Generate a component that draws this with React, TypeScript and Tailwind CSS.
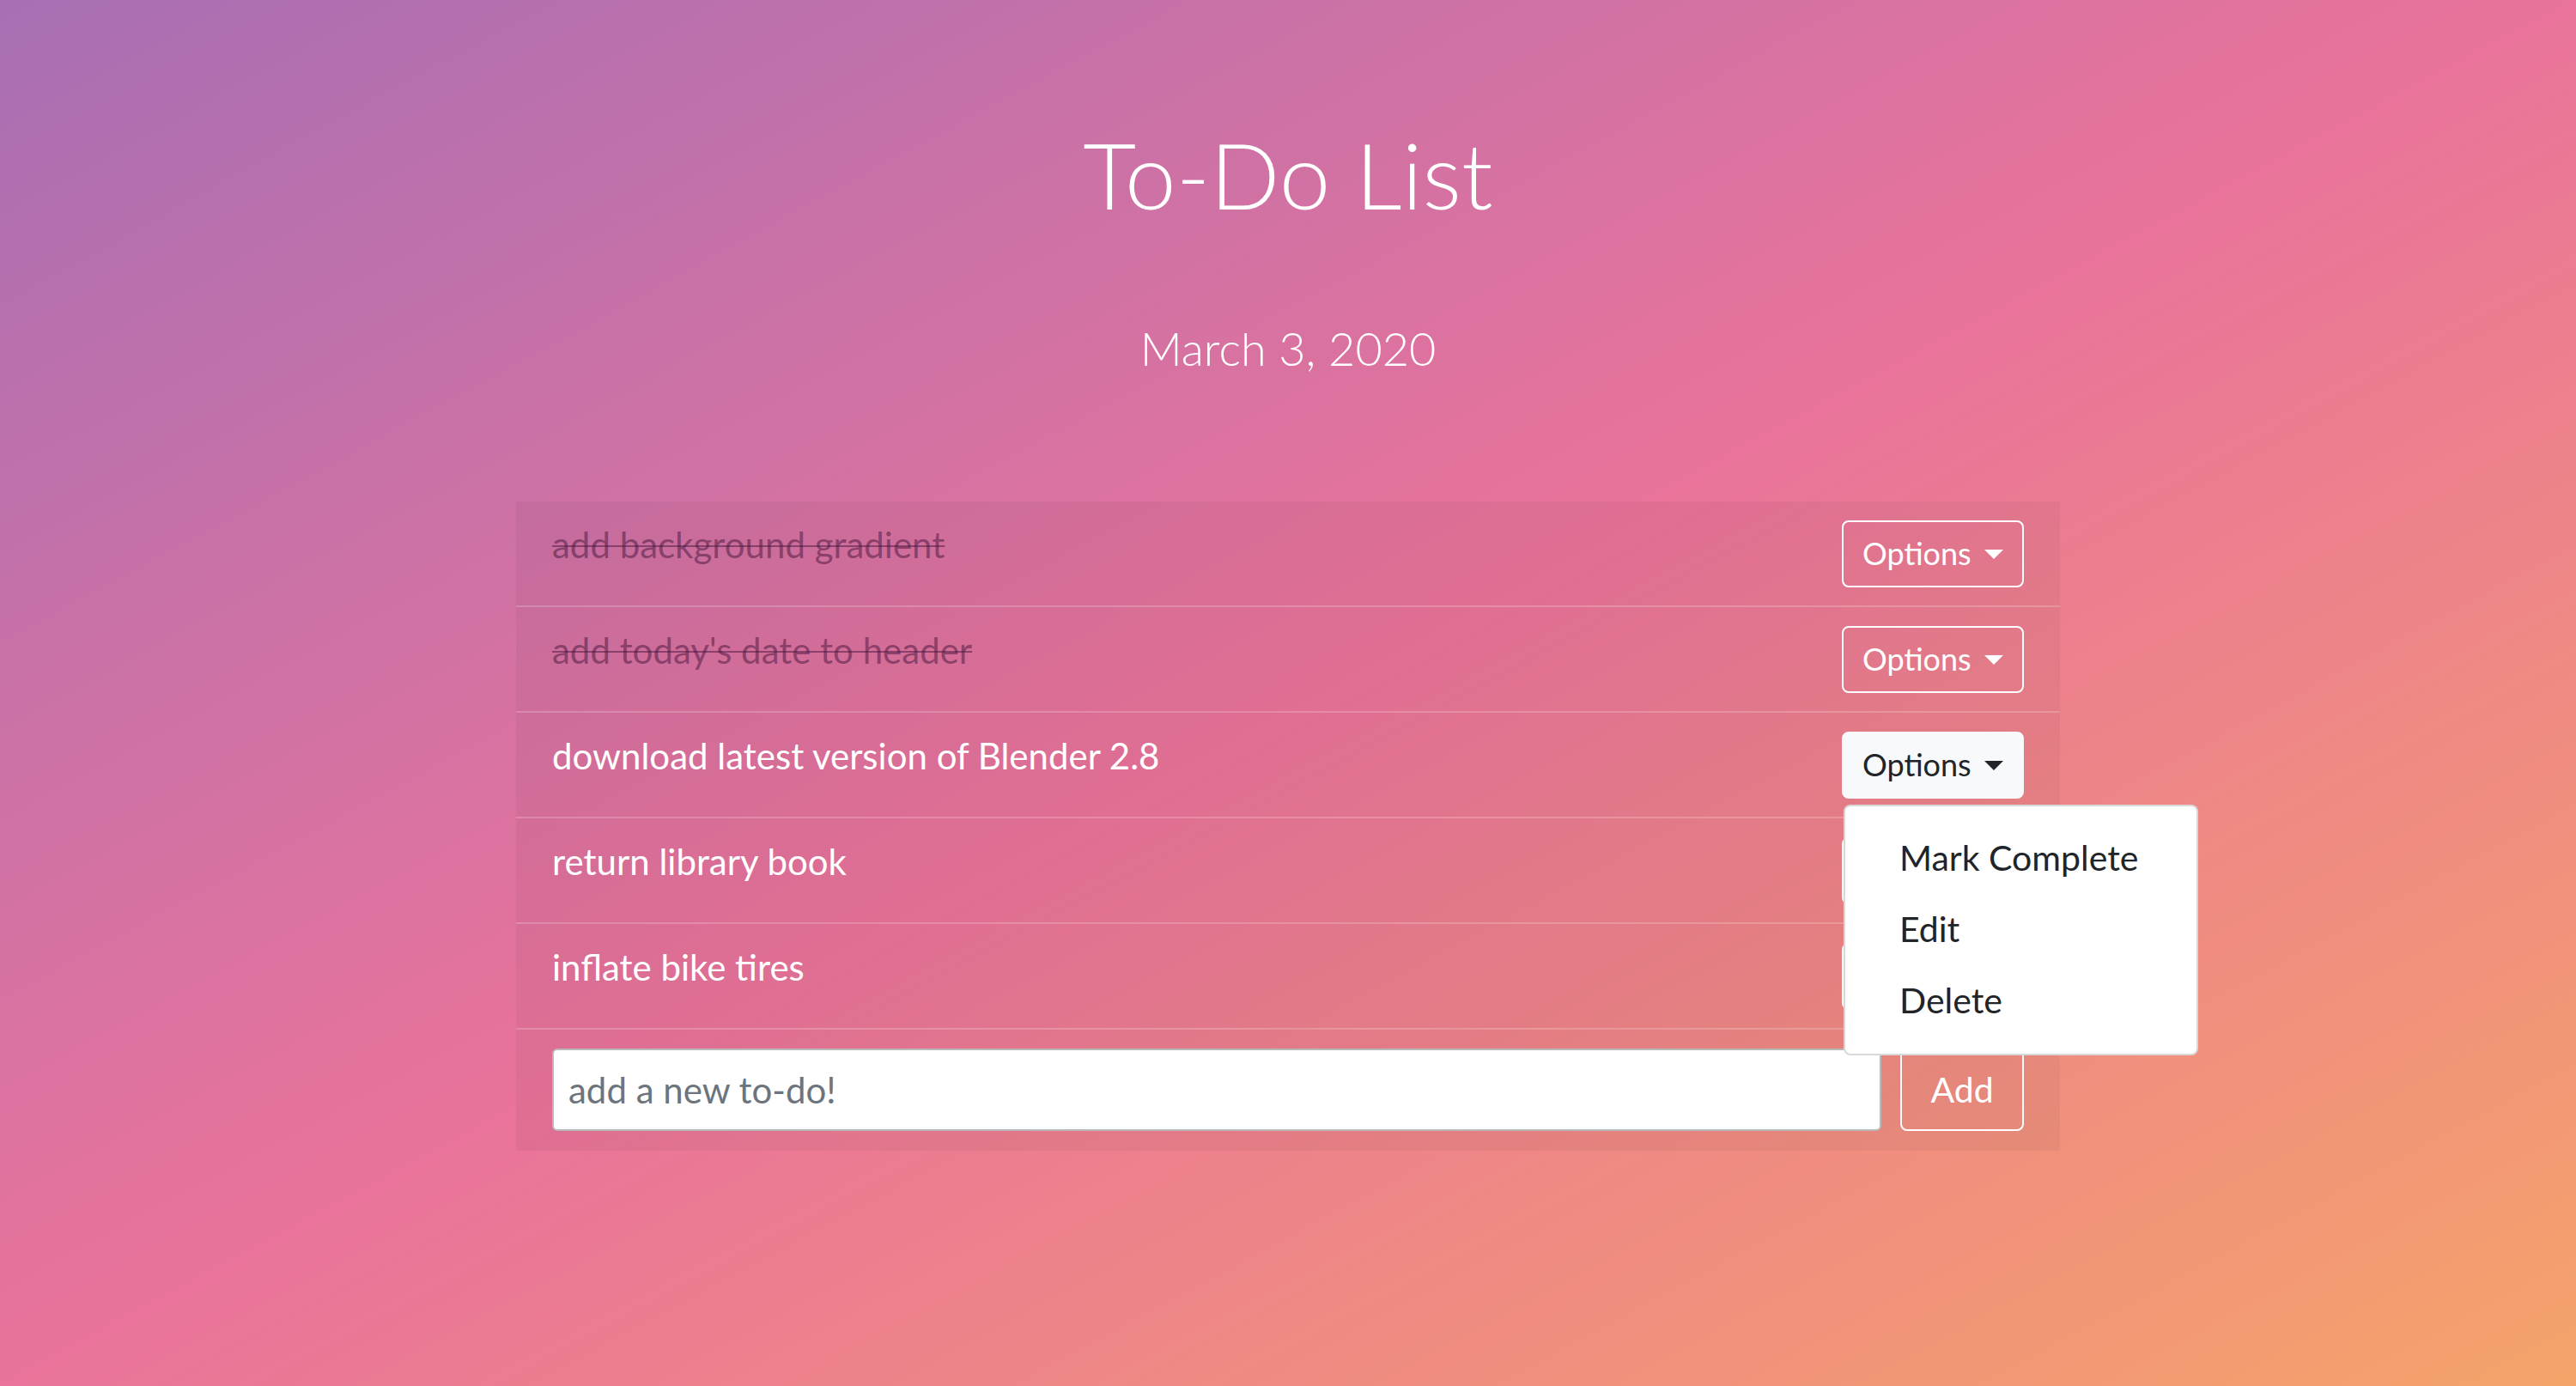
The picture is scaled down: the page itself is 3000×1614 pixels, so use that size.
import React from "react";

type Todo = {
  text: string;
  done: boolean;
};

const todos: Todo[] = [
  { text: "add background gradient", done: true },
  { text: "add today's date to header", done: true },
  { text: "download latest version of Blender 2.8", done: false },
  { text: "return library book", done: false },
  { text: "inflate bike tires", done: false },
];

const Caret = ({ dark }: { dark?: boolean }) => (
  <span
    className={
      dark
        ? "inline-block w-0 h-0 border-x-[11px] border-x-transparent border-t-[11px] border-t-[#212529]"
        : "inline-block w-0 h-0 border-x-[11px] border-x-transparent border-t-[11px] border-t-white"
    }
  />
);

const OptionsButton = ({ open }: { open: boolean }) => (
  <div className="relative shrink-0">
    <button
      className={
        open
          ? "h-[78px] w-[212px] rounded-[8px] border-2 border-[#f8f9fa] bg-[#f8f9fa] text-[#212529] flex items-center justify-between pl-[22px] pr-[22px] text-[36px] leading-none"
          : "h-[78px] w-[212px] rounded-[8px] border-2 border-white text-white flex items-center justify-between pl-[22px] pr-[22px] text-[36px] leading-none"
      }
    >
      <span className="-mt-[2px]">Options</span>
      <Caret dark={open} />
    </button>
    {open && (
      <div className="absolute left-[2px] top-[85px] z-10 w-[413px] rounded-[8px] border-2 border-black/15 bg-white pt-[18px] pb-[21px]">
        {["Mark Complete", "Edit", "Delete"].map((item) => (
          <div
            key={item}
            className="px-[63px] py-[11px] text-[41px] leading-[61px] text-[#212529]"
          >
            {item}
          </div>
        ))}
      </div>
    )}
  </div>
);

export default function App() {
  return (
    <div
      className="min-h-screen w-full bg-[linear-gradient(to_bottom_right,#a86fb4,#e9739a,#f5a36a)] text-white"
      style={{ fontFamily: "Lato, 'Open Sans', sans-serif" }}
    >
      <h1 className="pt-[139px] text-center text-[107px] font-light leading-[1.2]">
        To-Do List
      </h1>
      <p className="mt-[107px] text-center text-[54px] font-light leading-[1.2]">
        March 3, 2020
      </p>

      <div className="mx-auto mt-[145px] w-[1798px] bg-black/[0.04]">
        {todos.map((todo, idx) => (
          <div
            key={idx}
            className="flex items-start justify-between border-b-2 border-white/20 px-[42px] pt-[22px] pb-[21px]"
          >
            <span
              className={
                todo.done
                  ? "text-[42px] leading-[57px] text-[rgba(70,20,60,0.5)] line-through decoration-2"
                  : "text-[42px] leading-[57px] text-white"
              }
            >
              {todo.text}
            </span>
            <OptionsButton open={idx === 2} />
          </div>
        ))}
        <div className="flex gap-[22px] px-[42px] pt-[22px] pb-[23px]">
          <input
            type="text"
            placeholder="add a new to-do!"
            className="h-[96px] flex-1 rounded-[6px] border-2 border-[#b8b8b8] bg-white px-[17px] text-[42px] text-[#495057] placeholder:text-[#6c757d] outline-none"
          />
          <button className="h-[96px] w-[144px] rounded-[8px] border-2 border-white text-[41px] text-white">
            Add
          </button>
        </div>
      </div>
    </div>
  );
}
